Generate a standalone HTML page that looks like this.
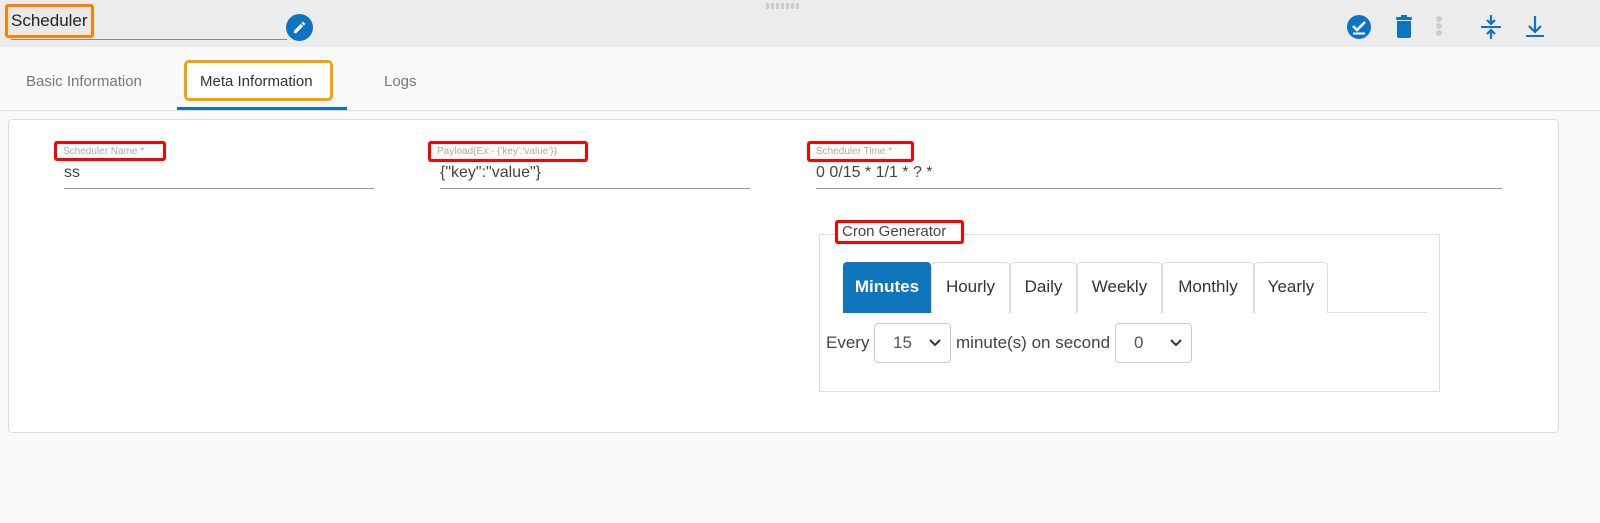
<!DOCTYPE html>
<html><head><style>
*{box-sizing:border-box;margin:0;padding:0}
body{width:1600px;height:523px;background:#f9f9f9;font-family:"Liberation Sans",sans-serif;position:relative;overflow:hidden;color:#333}
.a{position:absolute}
.red{position:absolute;border:3px solid #f00;border-radius:3px;background:#fff}
.lbl{font-size:10px;color:#aaa;white-space:nowrap;padding-left:6px;line-height:15px}
.val{font-size:16px;color:#444}
.line{position:absolute;height:1px;background:#999}
.tab{position:absolute;top:262px;height:51px;border:1px solid #ddd;border-bottom:none;border-radius:4px 4px 0 0;background:#fff;font-size:17px;color:#333;text-align:center;line-height:47px}
.sel{position:absolute;top:323px;width:77px;height:40px;border:1px solid #ccc;border-radius:4px;background:#fff;font-size:17px;color:#555;line-height:38px;padding-left:18px}
.sel svg{position:absolute;right:9px;top:15px}
</style></head><body>
<div class="a" style="left:0;top:0;width:1600px;height:47px;background:#ececec"></div>
<div class="a" style="left:766px;top:3px;width:34px;height:6px;background:repeating-linear-gradient(90deg,#ccc 0 3px,transparent 3px 5px)"></div>
<div class="a" style="left:5px;top:4px;width:89px;height:34px;border:3px solid #ff8000;border-radius:3px;background:#e8e8e8"></div>
<div class="a" style="left:11px;top:11px;font-size:17px;color:#222">Scheduler</div>
<div class="line" style="left:11px;top:39px;width:276px;background:#888"></div>
<div class="a" style="left:286px;top:14px;width:27px;height:27px;border-radius:50%;background:#0d74c4"></div>
<svg class="a" style="left:292px;top:20px" width="15" height="15" viewBox="0 0 24 24"><path fill="#fff" d="M3 17.25V21h3.75L17.8 9.94l-3.75-3.75L3 17.25zM20.7 7.04a1 1 0 000-1.41l-2.34-2.34a1 1 0 00-1.41 0l-1.83 1.83 3.75 3.75 1.83-1.83z"/></svg>
<svg class="a" style="left:1346px;top:14px" width="26" height="26" viewBox="0 0 26 26"><circle cx="13" cy="13" r="12" fill="#0d74c4"/><path d="M7 12l4 4 8-8" stroke="#fff" stroke-width="2.6" fill="none"/><rect x="7" y="18.5" width="12" height="2" fill="#fff"/></svg>
<svg class="a" style="left:1395px;top:15px" width="18" height="24" viewBox="0 0 18 24"><rect x="1" y="2" width="16" height="3" rx="1" fill="#0d74c4"/><rect x="6" y="0" width="6" height="3" fill="#0d74c4"/><path d="M2 6h14v15a2 2 0 01-2 2H4a2 2 0 01-2-2z" fill="#0d74c4"/></svg>
<div class="a" style="left:1436px;top:16px;width:6px;height:6px;border-radius:50%;background:#ccc;box-shadow:0 7px 0 #ccc,0 14px 0 #ccc"></div>
<svg class="a" style="left:1480px;top:14px" width="22" height="26" viewBox="0 0 22 26"><path d="M11 1v9M7 6l4 4 4-4M11 25v-9M7 20l4-4 4 4" stroke="#0d74c4" stroke-width="2.2" fill="none"/><rect x="1" y="12" width="20" height="2" fill="#0d74c4"/></svg>
<svg class="a" style="left:1524px;top:14px" width="22" height="24" viewBox="0 0 22 24"><path d="M11 2v16M5 12l6 6 6-6" stroke="#0d74c4" stroke-width="2.2" fill="none"/><rect x="2" y="21" width="18" height="2" fill="#0d74c4"/></svg>

<div class="a" style="left:0;top:110px;width:1600px;height:1px;background:#ddd"></div>
<div class="a" style="left:26px;top:73px;font-size:15px;color:#777">Basic Information</div>
<div class="a" style="left:184px;top:60px;width:149px;height:41px;border:3px solid #f5a300;border-radius:5px;background:#fff"></div>
<div class="a" style="left:200px;top:73px;font-size:15px;color:#333">Meta Information</div>
<div class="a" style="left:177px;top:107px;width:170px;height:3px;background:#0d74c4"></div>
<div class="a" style="left:384px;top:73px;font-size:15px;color:#777">Logs</div>

<div class="a" style="left:8px;top:119px;width:1551px;height:314px;background:#fff;border:1px solid #ddd;border-radius:4px"></div>

<div class="red" style="left:54px;top:141px;width:112px;height:20px"><div class="lbl">Scheduler Name *</div></div>
<div class="a val" style="left:64px;top:164px">ss</div>
<div class="line" style="left:64px;top:188px;width:310px"></div>
<div class="red" style="left:428px;top:141px;width:160px;height:21px"><div class="lbl">Payload(Ex:- {'key':'value'})</div></div>
<div class="a val" style="left:440px;top:164px">{"key":"value"}</div>
<div class="line" style="left:440px;top:188px;width:310px"></div>
<div class="red" style="left:807px;top:141px;width:107px;height:21px"><div class="lbl">Scheduler Time *</div></div>
<div class="a val" style="left:816px;top:164px">0 0/15 * 1/1 * ? *</div>
<div class="line" style="left:816px;top:188px;width:686px"></div>

<div class="a" style="left:819px;top:234px;width:621px;height:158px;border:1px solid #ddd"></div>
<div class="red" style="left:835px;top:220px;width:129px;height:24px"><div style="font-size:15px;color:#444;padding-left:4px;line-height:18px">Cron Generator</div></div>
<div class="a" style="left:843px;top:312px;width:584px;height:1px;background:#ddd"></div>
<div class="tab" style="left:843px;width:88px;background:#0f75bd;border-color:#0f75bd;color:#fff;font-weight:bold">Minutes</div>
<div class="tab" style="left:931px;width:79px">Hourly</div>
<div class="tab" style="left:1010px;width:67px">Daily</div>
<div class="tab" style="left:1077px;width:85px">Weekly</div>
<div class="tab" style="left:1162px;width:92px">Monthly</div>
<div class="tab" style="left:1254px;width:74px">Yearly</div>
<div class="a" style="left:826px;top:333px;font-size:17px;color:#444">Every</div>
<div class="sel" style="left:874px">15<svg width="12" height="8" viewBox="0 0 12 8"><path d="M1 1l5 5 5-5" stroke="#333" stroke-width="2" fill="none"/></svg></div>
<div class="a" style="left:956px;top:333px;font-size:17px;color:#444">minute(s) on second</div>
<div class="sel" style="left:1115px">0<svg width="12" height="8" viewBox="0 0 12 8"><path d="M1 1l5 5 5-5" stroke="#333" stroke-width="2" fill="none"/></svg></div>
</body></html>
